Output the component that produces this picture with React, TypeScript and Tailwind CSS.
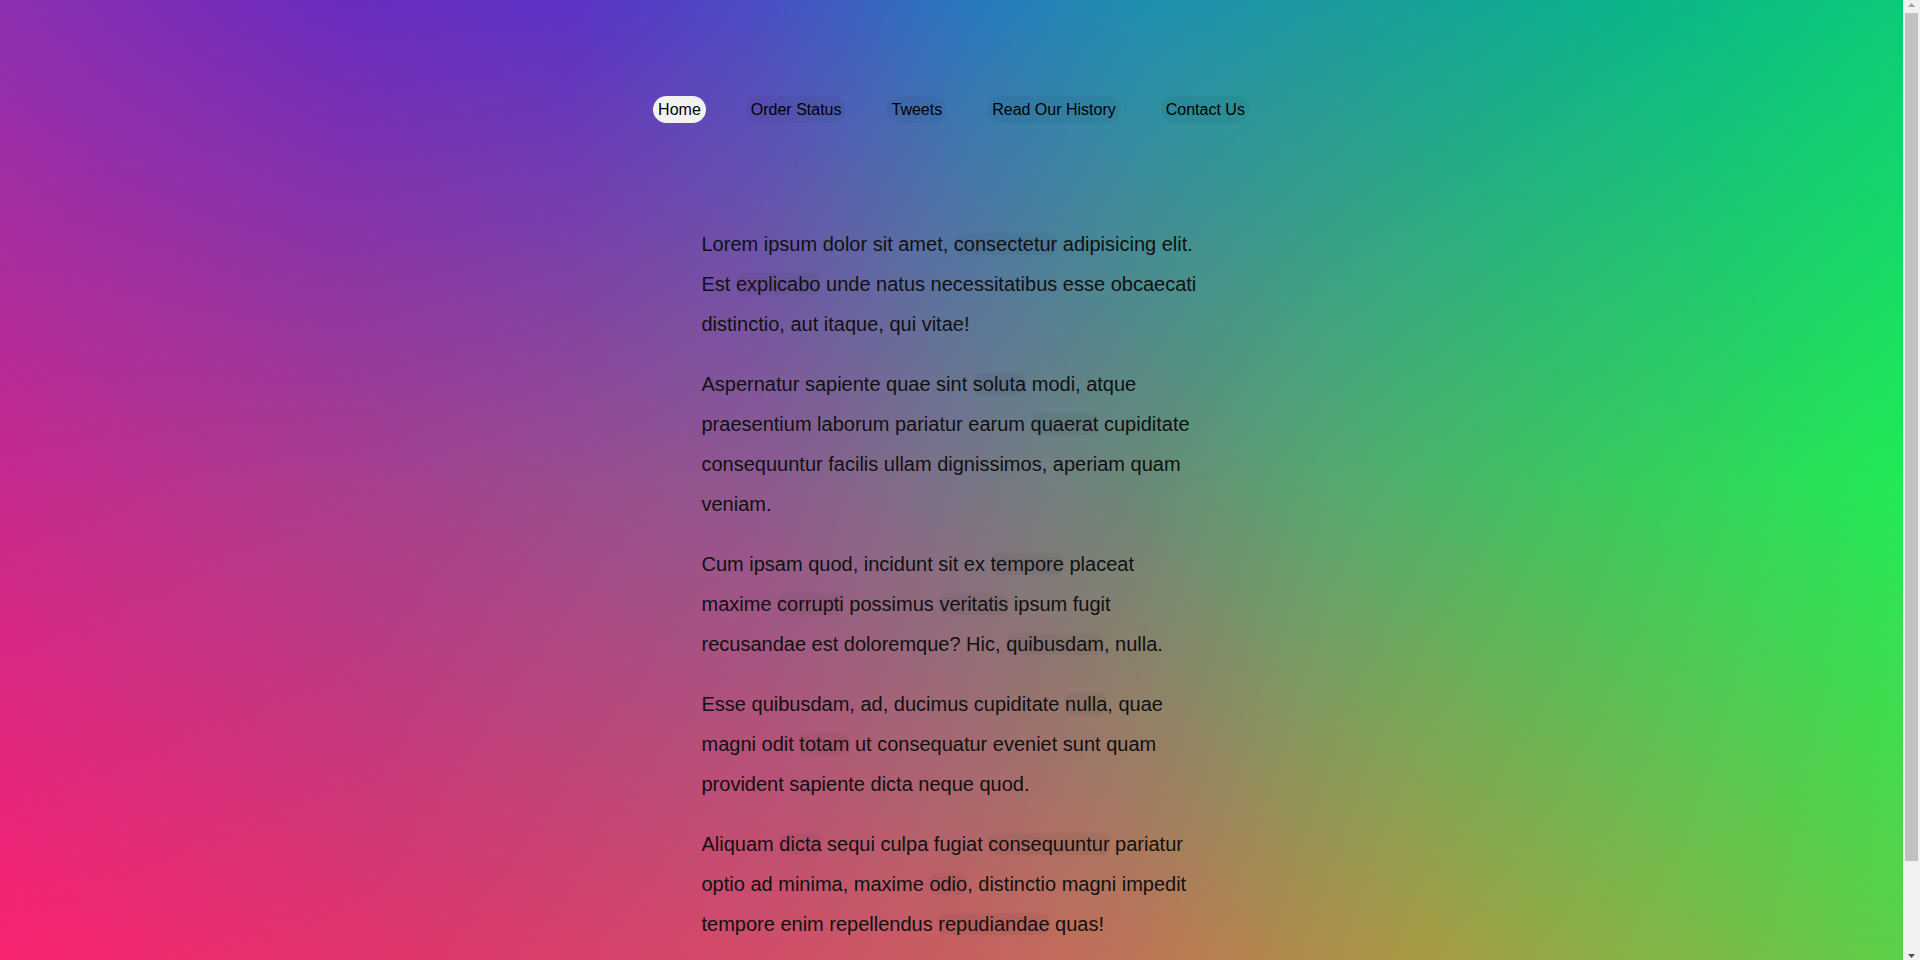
import React from "react";

const links = ["Home", "Order Status", "Tweets", "Read Our History", "Contact Us"];

// words marked with a soft dark background are wrapped in [ ]
const paragraphs = [
  "Lorem ipsum dolor sit amet, [consectetur] adipisicing elit. Est [explicabo] unde natus necessitatibus esse obcaecati distinctio, aut itaque, qui vitae!",
  "Aspernatur sapiente quae sint [soluta] modi, atque praesentium laborum pariatur earum [quaerat] cupiditate consequuntur facilis ullam dignissimos, aperiam quam veniam.",
  "Cum ipsam quod, incidunt sit ex [tempore] placeat maxime [corrupti] possimus [veritatis] ipsum fugit recusandae est doloremque? Hic, [quibusdam], nulla.",
  "Esse quibusdam, ad, ducimus cupiditate [nulla], quae magni odit [totam] ut consequatur eveniet sunt quam provident sapiente dicta neque quod.",
  "Aliquam [dicta] sequi culpa fugiat [consequuntur] pariatur optio ad minima, maxime [odio], distinctio magni impedit tempore enim repellendus [repudiandae] quas!",
];

function Paragraph({ text }: { text: string }) {
  const parts = text.split(/(\[[^\]]+\])/g);
  return (
    <p className="mb-[20px]">
      {parts.map((part, i) =>
        part.startsWith("[") ? (
          <mark key={i} className="bg-black/[0.045] text-inherit rounded-lg">
            {part.slice(1, -1)}
          </mark>
        ) : (
          <React.Fragment key={i}>{part}</React.Fragment>
        )
      )}
    </p>
  );
}

function Scrollbar() {
  return (
    <aside className="flex h-full w-[17px] shrink-0 flex-col items-center bg-[#f1f1f1]">
      <svg className="mt-[3px]" width="7" height="4" viewBox="0 0 7 4">
        <path d="M3.5 0L7 4H0z" fill="#a3a3a3" />
      </svg>
      <div className="mt-[6px] h-[848px] w-[13px] bg-[#c1c1c1]" />
      <svg className="mt-auto mb-[2px]" width="7" height="4" viewBox="0 0 7 4">
        <path d="M0 0h7L3.5 4z" fill="#505050" />
      </svg>
    </aside>
  );
}

export default function App() {
  return (
    <div className="flex h-screen w-full overflow-hidden font-['Liberation_Sans',Arial,sans-serif] text-[#111]">
      <div className="relative min-w-0 flex-1">
        {/* Background: three rows of horizontal gradients blended top -> middle -> bottom */}
        <div className="absolute inset-0 bg-[linear-gradient(to_right,#c72a8e_0%,#a6408f_20%,#8e5a90_40%,#7a7488_50%,#6a8a78_60%,#55a870_70%,#40c062_80%,#22ea55_100%)]">
          <div className="absolute inset-0 [mask-image:linear-gradient(to_bottom,black,transparent_50%)] bg-[linear-gradient(to_right,#8c30b0_0%,#6a2cbf_18%,#5b33c5_30%,#4a4ec4_40%,#2879bd_51%,#1f8fb0_60%,#1c9a9e_70%,#10ab92_80%,#0bba85_90%,#0cca78_100%)]" />
          <div className="absolute inset-0 [mask-image:linear-gradient(to_bottom,transparent_50%,black)] bg-[linear-gradient(to_right,#f92470_0%,#e0356c_20%,#d24c68_40%,#c85f60_50%,#be7456_60%,#b08a4a_68%,#a89a44_75%,#8aaf46_85%,#5ccf48_100%)]" />
        </div>

        <div className="relative h-full overflow-y-auto [scrollbar-width:none]">
          <div className="pt-[96px] pb-[116px]">
            <nav className="flex justify-center gap-[40px] text-[16px] leading-[19px] text-black">
              {links.map((l, i) => (
                <a
                  key={l}
                  href="#"
                  className={`rounded-full px-[5px] py-[4px] ${
                    i === 0 ? "bg-[#f2f2f2]" : "bg-black/[0.045]"
                  }`}
                >
                  {l}
                </a>
              ))}
            </nav>

            <main className="mx-auto mt-[101px] w-[500px] text-[20px] leading-[40px]">
              {paragraphs.map((p, i) => (
                <Paragraph key={i} text={p} />
              ))}
            </main>
          </div>
        </div>
      </div>

      <Scrollbar />
    </div>
  );
}
